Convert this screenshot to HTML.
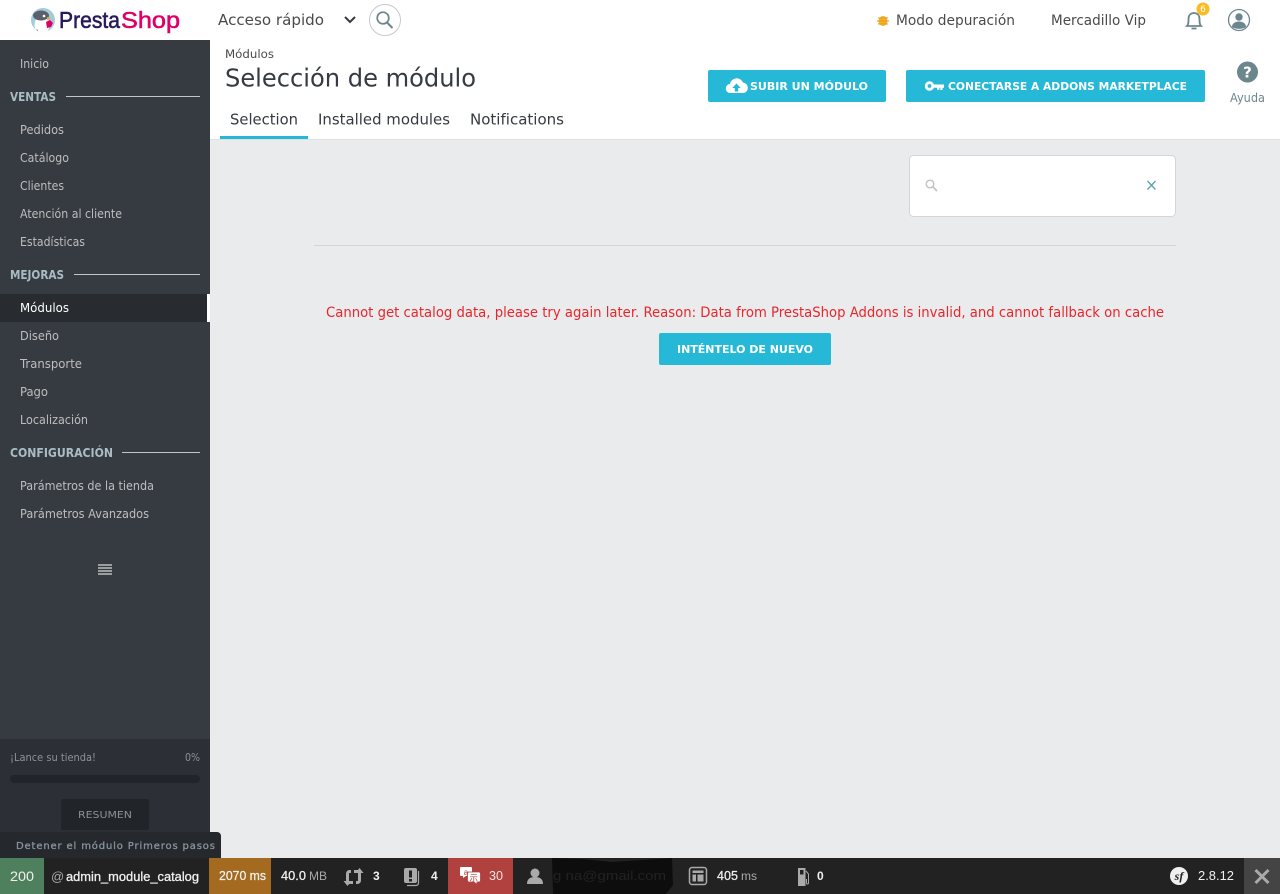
<!DOCTYPE html>
<html lang="es"><head><meta charset="utf-8"><title>Selección de módulo</title>
<style>
html,body{margin:0;padding:0;width:1280px;height:894px;overflow:hidden;background:#eaebec}
svg{display:block}
text{font-family:"DejaVu Sans","Liberation Sans",sans-serif}
.n{font-size:12.5px;fill:#bebebe}
.h2{font-size:12px;font-weight:bold;fill:#a9bcc4}
.ft text,text.ft{font-family:"Liberation Sans",sans-serif}
.f{font-size:12px;fill:#f0f0f0;font-weight:bold}
.g{font-size:12px;fill:#aaa}
</style></head><body>
<svg width="1280" height="894" viewBox="0 0 1280 894" xmlns="http://www.w3.org/2000/svg">
<defs><clipPath id="lc"><circle cx="43" cy="20" r="12"/></clipPath></defs>
<rect width="1280" height="894" fill="#eaebec"/>
<rect width="1280" height="40" fill="#fff"/>
<rect x="210" y="40" width="1070" height="99" fill="#fff"/>
<rect x="210" y="139" width="1070" height="1" fill="#dfdfdf"/>

<!-- logo -->
<circle cx="43" cy="20" r="12" fill="#a3cdd6"/>
<g clip-path="url(#lc)">
<ellipse cx="42" cy="25" rx="7.500" ry="9" fill="#fff"/>
<ellipse cx="41" cy="15.500" rx="8" ry="5" fill="#5b606c"/>
<circle cx="44" cy="16" r="1.300" fill="#fff"/>
<path d="M47 17l4 1.500-4 1.500z" fill="#f5a623"/>
<path d="M46 22l4-2 3 3-2 4-4 1z" fill="#df0067"/>
<path d="M33 33c1-3 3-4 5-3l-1 4z" fill="#5b606c"/>
</g>
<text class="ft" x="59" y="28" font-size="23" fill="#251b5b" stroke="#251b5b" stroke-width=".55" textLength="61" lengthAdjust="spacingAndGlyphs">Presta</text>
<text class="ft" x="121" y="28" font-size="23" fill="#df0067" stroke="#df0067" stroke-width=".55" textLength="59" lengthAdjust="spacingAndGlyphs">Shop</text>

<!-- top bar -->
<text x="218" y="25" font-size="15.500" fill="#4a4a4a" textLength="106" lengthAdjust="spacingAndGlyphs">Acceso rápido</text>
<path d="M345 17l5 5 5-5" fill="none" stroke="#363a41" stroke-width="2"/>
<circle cx="385" cy="20" r="15.500" fill="#fff" stroke="#c5c9cc"/>
<circle cx="383" cy="18" r="5.800" fill="none" stroke="#6c868e" stroke-width="1.700"/>
<path d="M387 22.500l5.500 5.500" stroke="#6c868e" stroke-width="2"/>
<ellipse cx="883" cy="21" rx="4.500" ry="5" fill="#f5b32d"/>
<path d="M878 18l10 0M877 21h12M878 24l10 0" stroke="#e49b14" stroke-width="1"/>
<text x="896" y="25" font-size="14" fill="#4a4a4a" textLength="119" lengthAdjust="spacingAndGlyphs">Modo depuración</text>
<text x="1051" y="25" font-size="14" fill="#4a4a4a" textLength="95" lengthAdjust="spacingAndGlyphs">Mercadillo Vip</text>
<path d="M1187 26c1.500-1.500 1.500-4 1.500-7 0-3.500 2-6 5.500-6s5.500 2.500 5.500 6c0 3 0 5.500 1.500 7z" fill="none" stroke="#6c868e" stroke-width="1.800"/>
<path d="M1191.500 28.500h5" stroke="#6c868e" stroke-width="1.800"/>
<circle cx="1203" cy="9" r="6.500" fill="#fbbb22"/>
<text x="1203" y="12" font-size="9" fill="#fff" text-anchor="middle">6</text>
<circle cx="1239" cy="20" r="10.500" fill="#fff" stroke="#6c868e" stroke-width="1.300"/>
<circle cx="1239" cy="17" r="3.700" fill="#6c868e"/>
<path d="M1232 27c0-3.500 3-5.500 7-5.500s7 2 7 5.500c-4 2.500-10 2.500-14 0z" fill="#6c868e"/>

<!-- page head -->
<text x="225" y="58" font-size="11.500" fill="#4a4a4a" textLength="49" lengthAdjust="spacingAndGlyphs">Módulos</text>
<text x="225" y="86.500" font-size="25" fill="#363a41" textLength="251" lengthAdjust="spacingAndGlyphs">Selección de módulo</text>
<text x="230" y="124.500" font-size="15.500" fill="#363a41" textLength="68" lengthAdjust="spacingAndGlyphs">Selection</text>
<text x="318" y="124.500" font-size="15.500" fill="#363a41" textLength="132" lengthAdjust="spacingAndGlyphs">Installed modules</text>
<text x="470" y="124.500" font-size="15.500" fill="#363a41" textLength="94" lengthAdjust="spacingAndGlyphs">Notifications</text>
<rect x="220" y="136" width="88" height="3" fill="#25b9d7"/>

<rect x="708" y="70" width="178" height="32" rx="2" fill="#25b9d7"/>
<path d="M730.500 93a4.500 4.500 0 0 1-.5-9 6.800 6.800 0 0 1 13-1.500 5.300 5.300 0 0 1 .5 10.500z" fill="#fff"/>
<path d="M736.500 83.500l4.200 4.500h-2.500v3.500h-3.400V88h-2.500z" fill="#25b9d7"/>
<text x="750" y="90" font-size="11" font-weight="bold" fill="#fff" textLength="118" lengthAdjust="spacingAndGlyphs">SUBIR UN MÓDULO</text>
<rect x="906" y="70" width="299" height="32" rx="2" fill="#25b9d7"/>
<circle cx="929.500" cy="86" r="3.300" fill="none" stroke="#fff" stroke-width="2.800"/>
<path d="M933 84.500h11v3.200h-1.500v2.300h-2.200v-2.300h-1v2h-2.200v-2H933z" fill="#fff"/>
<text x="948" y="90" font-size="11" font-weight="bold" fill="#fff" textLength="239" lengthAdjust="spacingAndGlyphs">CONECTARSE A ADDONS MARKETPLACE</text>
<circle cx="1247.500" cy="72" r="10.500" fill="#6c868e"/>
<text x="1247.500" y="77.500" font-size="15" font-weight="bold" fill="#fff" text-anchor="middle">?</text>
<text x="1230" y="102" font-size="12" fill="#6c868e" textLength="35" lengthAdjust="spacingAndGlyphs">Ayuda</text>

<!-- search -->
<rect x="909.500" y="155.500" width="266" height="61" rx="4" fill="#fff" stroke="#d3d6d8"/>
<circle cx="930" cy="184" r="3.800" fill="none" stroke="#c4c4c4" stroke-width="1.500"/>
<path d="M933 187l4 4" stroke="#c4c4c4" stroke-width="1.800"/>
<path d="M1147.500 181l8 8.500M1155.500 181l-8 8.500" stroke="#5d9fb3" stroke-width="1.300"/>
<rect x="314" y="245" width="862" height="1" fill="#d3d6d8"/>

<text x="326" y="317" font-size="14" fill="#e8262c" textLength="838" lengthAdjust="spacingAndGlyphs">Cannot get catalog data, please try again later. Reason: Data from PrestaShop Addons is invalid, and cannot fallback on cache</text>
<rect x="659" y="333" width="172" height="32" rx="2" fill="#25b9d7"/>
<text x="677" y="353" font-size="11" font-weight="bold" fill="#fff" textLength="136" lengthAdjust="spacingAndGlyphs">INTÉNTELO DE NUEVO</text>

<!-- sidebar -->
<rect x="0" y="40" width="210" height="818" fill="#363a41"/>
<text class="n" x="20" y="68" textLength="29" lengthAdjust="spacingAndGlyphs">Inicio</text>
<text class="h2" x="10" y="101" textLength="46" lengthAdjust="spacingAndGlyphs">VENTAS</text>
<rect x="66" y="96" width="134" height="1" fill="#bcc8cd"/>
<text class="n" x="20" y="134" textLength="44" lengthAdjust="spacingAndGlyphs">Pedidos</text>
<text class="n" x="20" y="162" textLength="49" lengthAdjust="spacingAndGlyphs">Catálogo</text>
<text class="n" x="20" y="190" textLength="44" lengthAdjust="spacingAndGlyphs">Clientes</text>
<text class="n" x="20" y="218" textLength="102" lengthAdjust="spacingAndGlyphs">Atención al cliente</text>
<text class="n" x="20" y="246" textLength="65" lengthAdjust="spacingAndGlyphs">Estadísticas</text>
<text class="h2" x="10" y="279" textLength="54" lengthAdjust="spacingAndGlyphs">MEJORAS</text>
<rect x="74" y="274" width="126" height="1" fill="#bcc8cd"/>
<rect x="0" y="294" width="207" height="28" fill="#282b30"/>
<rect x="207" y="294" width="3" height="28" fill="#fff"/>
<text class="n" x="20" y="312" textLength="49" lengthAdjust="spacingAndGlyphs" style="fill:#fff">Módulos</text>
<text class="n" x="20" y="340" textLength="39" lengthAdjust="spacingAndGlyphs">Diseño</text>
<text class="n" x="20" y="368" textLength="62" lengthAdjust="spacingAndGlyphs">Transporte</text>
<text class="n" x="20" y="396" textLength="28" lengthAdjust="spacingAndGlyphs">Pago</text>
<text class="n" x="20" y="424" textLength="68" lengthAdjust="spacingAndGlyphs">Localización</text>
<text class="h2" x="10" y="457" textLength="103" lengthAdjust="spacingAndGlyphs">CONFIGURACIÓN</text>
<rect x="122" y="452" width="78" height="1" fill="#bcc8cd"/>
<text class="n" x="20" y="490" textLength="134" lengthAdjust="spacingAndGlyphs">Parámetros de la tienda</text>
<text class="n" x="20" y="518" textLength="129" lengthAdjust="spacingAndGlyphs">Parámetros Avanzados</text>
<path d="M98 565h14M98 568h14M98 571h14M98 574h14" stroke="#bebebe" stroke-width="1.500"/>

<rect x="0" y="739" width="210" height="119" fill="#2c2f36"/>
<text x="10" y="761" font-size="10.500" fill="#8a9299" textLength="86" lengthAdjust="spacingAndGlyphs">¡Lance su tienda!</text>
<text x="185" y="761" font-size="10.500" fill="#8a9299" textLength="15" lengthAdjust="spacingAndGlyphs">0%</text>
<rect x="10" y="775" width="190" height="8" rx="4" fill="#212429"/>
<rect x="61" y="799" width="88" height="31" rx="2" fill="#212429"/>
<text x="78" y="818" font-size="10" fill="#8a9299" textLength="54" lengthAdjust="spacingAndGlyphs">RESUMEN</text>
<path d="M0 832h217a4 4 0 0 1 4 4v22H0z" fill="#25282d"/>
<text x="16" y="849" font-size="10" fill="#86949c" stroke="#86949c" stroke-width=".3" textLength="199" lengthAdjust="spacing">Detener el módulo Primeros pasos</text>

<!-- profiler bar -->
<g class="ft">
<rect x="0" y="858" width="1280" height="36" fill="#222"/>
<rect x="0" y="858" width="44" height="36" fill="#4f805d"/>
<text x="10" y="881" font-size="14" fill="#f0f0f0" textLength="24" lengthAdjust="spacingAndGlyphs">200</text>
<text x="51" y="881" font-size="13" fill="#aaa">@</text>
<text x="66" y="881" font-size="13" fill="#f0f0f0" textLength="133" lengthAdjust="spacingAndGlyphs" style="stroke:#f0f0f0;stroke-width:.3">admin_module_catalog</text>
<rect x="209" y="858" width="62" height="36" fill="#a46a1f"/>
<text x="219" y="880" font-size="12.500" fill="#f0f0f0" stroke="#f0f0f0" stroke-width=".25" textLength="47" lengthAdjust="spacingAndGlyphs">2070 ms</text>
<text x="281" y="880" font-size="12.500" fill="#f0f0f0" stroke="#f0f0f0" stroke-width=".25" textLength="25" lengthAdjust="spacingAndGlyphs">40.0</text>
<text x="309" y="880" class="g" textLength="18" lengthAdjust="spacingAndGlyphs">MB</text>

<rect x="347.500" y="871.500" width="12" height="11" rx="2" fill="none" stroke="#aaa" stroke-width="3"/>
<rect x="351" y="869" width="3" height="5" fill="#222"/><rect x="353" y="880" width="3" height="5" fill="#222"/>
<path d="M343.500 881l4 5 4-5zM355.500 873l4-5 4 5z" fill="#aaa"/>
<text x="373" y="880" class="f">3</text>
<path d="M406 868h9a2 2 0 0 1 2 2v11a2 2 0 0 1-2 2h-9a2 2 0 0 1-2-2v-11a2 2 0 0 1 2-2z" fill="#aaa"/>
<path d="M418.500 871v12a2.500 2.500 0 0 1-2.500 2.500h-9" fill="none" stroke="#aaa" stroke-width="1.200"/>
<rect x="409" y="870.500" width="3" height="7" fill="#222"/><rect x="409" y="879" width="3" height="2.500" fill="#222"/>
<text x="431" y="880" class="f">4</text>
<rect x="448" y="858" width="65" height="36" fill="#b0413e"/>
<path d="M461 867h10a1 1 0 0 1 1 1v7a1 1 0 0 1-1 1h-5l-3 2v-2h-2a1 1 0 0 1-1-1v-7a1 1 0 0 1 1-1z" fill="#fff"/>
<text x="466" y="875" font-size="8" fill="#b0413e" text-anchor="middle">a</text>
<path d="M469 872h10a1.500 1.500 0 0 1 1.500 1.500v7a1.500 1.500 0 0 1-1.500 1.500h-2v2.500l-3-2.500h-5a1.500 1.500 0 0 1-1.500-1.500v-7a1.500 1.500 0 0 1 1.500-1.500z" fill="#fff" stroke="#b0413e" stroke-width=".8"/>
<text x="473.800" y="881" font-size="8.500" fill="#b0413e" text-anchor="middle" style="font-family:'Noto Sans CJK JP',sans-serif">示</text>
<text x="489" y="880" font-size="12.500" textLength="14" lengthAdjust="spacingAndGlyphs" fill="#f5e5e5">30</text>
<circle cx="535" cy="873" r="4.500" fill="#aaa"/>
<path d="M527 884c0-5 3-7 8-7s8 2 8 7z" fill="#aaa"/>
<path d="M552 858l30 1 30 3 30-2 30-2 1 27-7 9H553z" fill="#0d0d0d"/>
<text x="553" y="880" font-size="12.500" fill="#222" textLength="113" lengthAdjust="spacingAndGlyphs">g    na@gmail.com</text>
<rect x="689.500" y="867.500" width="17" height="17" rx="2.500" fill="none" stroke="#aaa" stroke-width="1.500"/>
<path d="M692.500 870.500h11v2.500h-11zM692.500 874.500h3.500v7h-3.500zM697.500 874.500h6v7h-6z" fill="#aaa"/>
<text x="717" y="880" font-size="12.500" fill="#f0f0f0" stroke="#f0f0f0" stroke-width=".25" textLength="21" lengthAdjust="spacingAndGlyphs">405</text>
<text x="741" y="880" class="g" textLength="16" lengthAdjust="spacingAndGlyphs">ms</text>
<path d="M798 868h7.500v18H798z" fill="#aaa"/>
<rect x="800" y="870" width="3.500" height="4.500" fill="#222"/>
<path d="M806 871l2.500 3v9a1 1 0 0 1-2 0v-4" fill="none" stroke="#aaa"/>
<text x="817" y="880" class="f">0</text>

<circle cx="1179" cy="876" r="9" fill="#f0f0f0"/>
<text x="1179" y="880" font-size="12" font-weight="bold" font-style="italic" fill="#222" text-anchor="middle" style="font-family:'Liberation Serif',serif">sf</text>
<text x="1198" y="880" font-size="13" fill="#f0f0f0" textLength="36" lengthAdjust="spacingAndGlyphs">2.8.12</text>
<rect x="1244" y="858" width="36" height="36" fill="#444"/>
<path d="M1255.500 870l13 13M1268.500 870l-13 13" stroke="#aaa" stroke-width="3"/>
</g>
</svg>
</body></html>
